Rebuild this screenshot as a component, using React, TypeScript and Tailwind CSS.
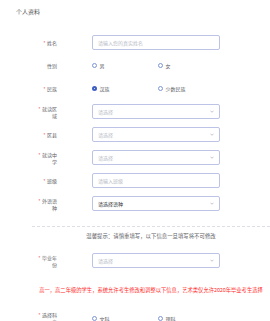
import React from "react";

function Label({ text, required }: { text: string; required?: boolean }) {
  return (
    <div className="w-[57px] shrink-0 flex justify-end">
      <div className="w-[21px] text-right text-[5px] leading-[7px] text-[#606266]">
        {required && <span className="text-[#f56c6c] mr-[1.5px]">*</span>}
        {text}
      </div>
    </div>
  );
}

function Chevron() {
  return (
    <svg width="4" height="3" viewBox="0 0 8 5" className="shrink-0">
      <polyline points="1,1 4,4 7,1" fill="none" stroke="#9aa0b0" strokeWidth="1.2" />
    </svg>
  );
}

function Field({ text, dark, select }: { text: string; dark?: boolean; select?: boolean }) {
  return (
    <div className="ml-[35px] w-[128px] h-[15px] border border-[#bcc3e6] rounded-[2px] flex items-center justify-between pl-[5px] pr-[5px]">
      <span className={"text-[5px] leading-[7px] " + (dark ? "text-[#303133]" : "text-[#b8bcc6]")}>{text}</span>
      {select && <Chevron />}
    </div>
  );
}

function Radio({ text, checked }: { text: string; checked?: boolean }) {
  return (
    <div className="w-[66px] flex items-center">
      {checked ? (
        <span className="w-[5px] h-[5px] rounded-full bg-[#3d5fc4] flex items-center justify-center">
          <span className="w-[1.5px] h-[1.5px] rounded-full bg-white" />
        </span>
      ) : (
        <span className="w-[5px] h-[5px] rounded-full border border-[#7d95d8] bg-white" />
      )}
      <span className="ml-[2.5px] text-[5px] leading-[7px] text-[#606266]">{text}</span>
    </div>
  );
}

function Row({ children }: { children: React.ReactNode }) {
  return <div className="flex items-center h-[15px]">{children}</div>;
}

export default function App() {
  return (
    <div className="w-[270px] h-[321px] overflow-hidden bg-white font-['Noto_Sans_CJK_SC','Noto_Sans',sans-serif]">
      <div className="h-[24px] flex items-center pl-[16px] text-[6px] leading-[8px] text-[#555]">个人资料</div>
      <div className="mt-[11px] flex flex-col gap-[8px]">
        <Row>
          <Label text="姓名" required />
          <Field text="请输入您的真实姓名" />
        </Row>
        <Row>
          <Label text="性别" />
          <div className="ml-[35px] flex">
            <Radio text="男" />
            <Radio text="女" />
          </div>
        </Row>
        <Row>
          <Label text="民族" required />
          <div className="ml-[35px] flex">
            <Radio text="汉族" checked />
            <Radio text="少数民族" />
          </div>
        </Row>
        <Row>
          <Label text="就读区域" required />
          <Field text="请选择" select />
        </Row>
        <Row>
          <Label text="区县" required />
          <Field text="请选择" select />
        </Row>
        <Row>
          <Label text="就读中学" required />
          <Field text="请选择" select />
        </Row>
        <Row>
          <Label text="班级" required />
          <Field text="请输入班级" />
        </Row>
        <Row>
          <Label text="外语语种" required />
          <Field text="请选择语种" dark select />
        </Row>
      </div>
      <div className="mt-[15px] ml-[32px] border-t border-dashed border-[#dcdfe6]" />
      <div className="ml-[32px] mt-[4px] h-[10px] flex items-center justify-center text-[5.4px] leading-[10px] text-[#606266]">
        温馨提示：请慎重填写，以下信息一旦填写将不可修改
      </div>
      <div className="mt-[12px]">
        <Row>
          <Label text="毕业年份" required />
          <Field text="请选择" select />
        </Row>
      </div>
      <div className="mt-[17px] ml-[32px] h-[10px] flex items-center justify-center text-[5.3px] leading-[10px] text-[#ff2d2d] whitespace-nowrap">
        高一，高二年级的学生，系统允许考生修改和调整以下信息，艺术类仅允许2020年毕业考生选择
      </div>
      <div className="mt-[15.5px]">
        <Row>
          <Label text="选择科类" required />
          <div className="ml-[35px] flex">
            <Radio text="文科" />
            <Radio text="理科" />
          </div>
        </Row>
      </div>
    </div>
  );
}
